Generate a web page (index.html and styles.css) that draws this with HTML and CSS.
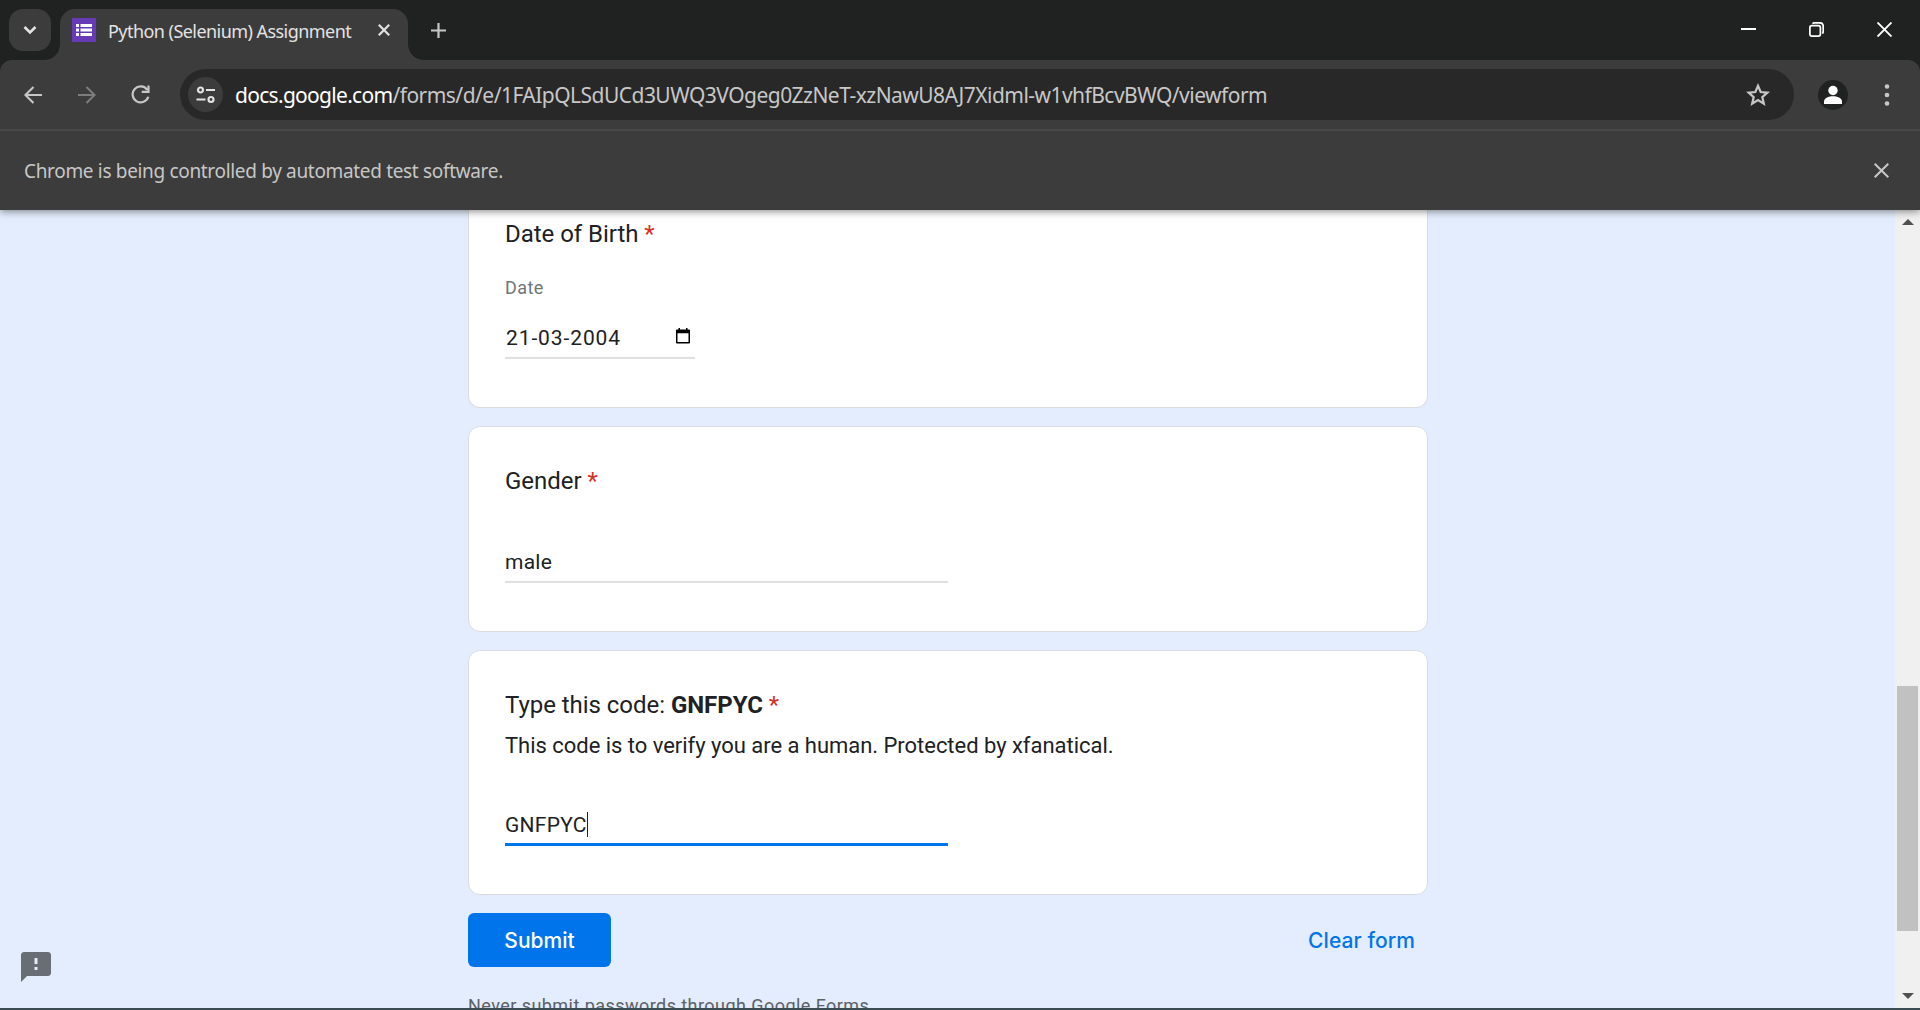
FILE: index.html
```html
<!DOCTYPE html>
<html lang="en">
<head>
<meta charset="utf-8">
<title>Python (Selenium) Assignment</title>
<link rel="stylesheet" href="styles.css">
</head>
<body>
<div class="browser">
  <header class="tabstrip">
    <button class="tab-search" aria-label="Search tabs"><svg width="14" height="10" viewBox="0 0 14 10"><path d="M1.5 2l5.500 5.500L12.500 2" fill="none" stroke="#e3e3e3" stroke-width="2.600"/></svg></button>
    <div class="tab">
      <svg class="favicon" width="24" height="24" viewBox="0 0 24 24"><rect width="24" height="24" rx="1" fill="#673ab7"/><path d="M4 6h3v3H4zM8.500 6H20v3H8.500zM4 10.500h3v3H4zM8.500 10.500H20v3H8.500zM4 15h3v3H4zM8.500 15H20v3H8.500z" fill="#fff"/></svg>
      <span class="tab-title">Python (Selenium) Assignment</span>
      <svg width="12" height="12" viewBox="0 0 12 12"><path d="M.8.800l10.400 10.400M11.200.800L.8 11.200" stroke="#e3e3e3" stroke-width="2.200"/></svg>
    </div>
    <svg class="new-tab" width="15" height="15" viewBox="0 0 15 15"><path d="M7.500 0v15M0 7.500h15" stroke="#c7c7c7" stroke-width="2.200"/></svg>
    <div class="window-controls">
      <svg width="15" height="15" viewBox="0 0 15 15"><path d="M0 7h15" stroke="#fff" stroke-width="2"/></svg>
      <svg width="15" height="15" viewBox="0 0 15 15"><rect x=".9" y="3.600" width="10.500" height="10.500" rx="2" fill="none" stroke="#fff" stroke-width="1.700"/><path d="M3.500 1.600Q4 .8 5.500.800H10.500Q14.200.800 14.200 4.500V9.500Q14.200 11 13.300 11.500" fill="none" stroke="#fff" stroke-width="1.700"/></svg>
      <svg width="15" height="15" viewBox="0 0 15 15"><path d="M.5.500l14 14M14.500.500l-14 14" stroke="#fff" stroke-width="1.900"/></svg>
    </div>
  </header>
  <nav class="toolbar">
    <div class="nav-icons">
      <svg width="18" height="18" viewBox="0 0 18 18"><path d="M18 9H1.500M9.500.900L1.400 9l8.100 8.100" fill="none" stroke="#c7c7c7" stroke-width="2.100"/></svg>
      <svg width="18" height="18" viewBox="0 0 18 18"><path d="M0 9h16.500M8.500.900L16.600 9l-8.100 8.100" fill="none" stroke="#7c7c7c" stroke-width="2.100"/></svg>
      <svg width="19" height="19" viewBox="0 0 19 19"><path d="M16.200 4.800A8 8 0 1 0 17.300 11.700M17.500.500v6.300h-6.800" fill="none" stroke="#c7c7c7" stroke-width="2.200"/></svg>
    </div>
    <div class="omnibox">
      <span class="site-info"><svg width="20" height="18" viewBox="0 0 20 18"><g fill="none" stroke="#e3e3e3" stroke-width="2.200"><circle cx="4.500" cy="4" r="2.500"/><path d="M10 4h9M.5 13.500h9"/><circle cx="15" cy="13.500" r="2.500"/></g></svg></span>
      <span class="url"><span class="host">docs.google.com</span>/forms/d/e/1FAIpQLSdUCd3UWQ3VOgeg0ZzNeT-xzNawU8AJ7Xidml-w1vhfBcvBWQ/viewform</span>
      <svg class="star" width="24" height="24" viewBox="0 0 24 24"><path d="M12 2.800l2.650 6.200 6.750.600-5.100 4.450 1.530 6.600L12 17.150l-5.830 3.500L7.700 14.050 2.600 9.600l6.750-.6z" fill="none" stroke="#c7c7c7" stroke-width="2.200"/></svg>
    </div>
    <svg class="profile" width="30" height="30" viewBox="0 0 30 30"><circle cx="15" cy="15" r="15" fill="#202221"/><circle cx="15" cy="10.500" r="4.700" fill="#fff"/><path d="M6 24v-2.500C6 18 11 16.200 15 16.200s9 1.800 9 5.300V24z" fill="#fff"/></svg>
    <svg class="menu" width="6" height="22" viewBox="0 0 6 22"><g fill="#c7c7c7"><circle cx="3" cy="2.500" r="2.300"/><circle cx="3" cy="11" r="2.300"/><circle cx="3" cy="19.500" r="2.300"/></g></svg>
  </nav>
  <div class="infobar">
    <span class="info-text">Chrome is being controlled by automated test software.</span>
    <svg width="15" height="15" viewBox="0 0 15 15"><path d="M.7.700l13.600 13.600M14.300.700L.7 14.300" stroke="#c7c7c7" stroke-width="2"/></svg>
  </div>
  <div class="viewport">
    <main class="page">
      <form class="form">
        <section class="card card-cut">
          <h2 class="question">Date of Birth <span class="required">*</span></h2>
          <div class="date-label">Date</div>
          <div class="field date-field"><span>21-03-2004</span><svg width="14" height="16" viewBox="0 0 14 16"><path d="M2.500 0h1.500v1.500h6V0h1.500v1.500H13q1 0 1 1V14.500q0 1-1 1H1q-1 0-1-1V2.500q0-1 1-1h1.500zM1.500 5.300V14h11V5.300z" fill="#000" fill-rule="evenodd"/></svg></div>
        </section>
        <section class="card">
          <h2 class="question">Gender <span class="required">*</span></h2>
          <div class="field text-field"><span>male</span></div>
        </section>
        <section class="card">
          <h2 class="question">Type this code: <b>GNFPYC</b> <span class="required">*</span></h2>
          <p class="description">This code is to verify you are a human. Protected by xfanatical.</p>
          <div class="field text-field focused"><span>GNFPYC</span><span class="caret"></span></div>
        </section>
        <div class="actions">
          <button type="button" class="submit">Submit</button>
          <span class="clear">Clear form</span>
        </div>
        <p class="notice">Never submit passwords through Google Forms.</p>
      </form>
      <svg class="feedback" width="30" height="30" viewBox="2 2 20 20"><path d="M20 2H4c-1.100 0-2 .9-2 2v18l4-4h14c1.100 0 2-.9 2-2V4c0-1.100-.9-2-2-2zm-7 12h-2v-2h2v2zm0-4h-2V6h2v4z" fill="#696d74"/></svg>
    </main>
    <aside class="scrollbar">
      <svg width="12" height="6" viewBox="0 0 12 6"><path d="M0 6l6-6 6 6z" fill="#505050"/></svg>
      <span class="thumb"></span>
      <svg width="12" height="6" viewBox="0 0 12 6"><path d="M0 0l6 6 6-6z" fill="#505050"/></svg>
    </aside>
  </div>
</div>
</body>
</html>
```
FILE: styles.css
```css
* { box-sizing: border-box; }
body { margin: 0; overflow: hidden; background: #3b4c52; }
h2, p { margin: 0; font-weight: 400; }
svg { display: block; flex: none; }
button { border: 0; padding: 0; }

.browser { display: flex; flex-direction: column; width: 1920px; height: 1008px; background: #202221; font-family: "Noto Sans", sans-serif; }

.tabstrip { display: flex; height: 60px; padding: 9px 15px 0 9px; }
.tab-search { display: grid; place-items: center; width: 42px; height: 42px; border-radius: 14px; background: #3c3c3c; }
.tab { position: relative; display: flex; align-items: center; width: 348px; height: 51px; margin-left: 9px; padding: 0 18px 9px 12px; border-radius: 15px 15px 0 0; background: #3c3c3c; }
.tab::before, .tab::after { content: ""; position: absolute; bottom: 0; width: 15px; height: 15px; }
.tab::before { left: -15px; background: radial-gradient(circle at 0 0, transparent 14.5px, #3c3c3c 15px); }
.tab::after { right: -15px; background: radial-gradient(circle at 100% 0, transparent 14.5px, #3c3c3c 15px); }
.tab-title { margin: 2px auto 0 12px; color: #e3e3e3; font-size: 18px; line-height: 24px; letter-spacing: -.55px; white-space: nowrap; }
.new-tab { margin: 14px 0 0 23px; }
.window-controls { display: flex; gap: 53px; margin: 13px 13px 0 auto; }

.toolbar { display: flex; align-items: center; height: 71px; padding: 0 30px 0 24px; border-bottom: 2px solid #474747; border-radius: 12px 12px 0 0; background: #3c3c3c; }
.nav-icons { display: flex; align-items: center; gap: 35.5px; width: 156px; }
.omnibox { display: flex; align-items: center; width: 1614px; height: 51px; padding: 0 24px 0 8px; border-radius: 26px; background: #282828; }
.site-info { display: grid; place-items: center; width: 35px; height: 35px; border-radius: 50%; background: #3c3c3c; }
.url { margin-left: 12px; color: #c7c7c7; font-size: 21px; line-height: 30px; letter-spacing: -.53px; white-space: nowrap; }
.host { color: #fff; letter-spacing: -.7px; }
.star { margin-left: auto; }
.profile { margin-left: 24px; }
.menu { margin-left: auto; }

.infobar { position: relative; z-index: 1; display: flex; align-items: center; justify-content: space-between; height: 79px; padding: 0 31px 0 24px; background: #3c3c3c; color: #c7c7c7; font-size: 19px; letter-spacing: -.33px; box-shadow: 0 1px 8px rgba(0, 0, 0, .5); clip-path: inset(0 0 -20px 0); }

.viewport { display: flex; height: 798px; }
.page { position: relative; flex: 1; overflow: hidden; background: #e3edfd; font-family: Roboto, sans-serif; }
.form { display: flex; flex-direction: column; width: 960px; margin-left: 468px; color: #202124; }
.card { margin-bottom: 18px; padding: 36px 36px 48px; border: 1px solid #dadce0; border-radius: 12px; background: #fff; }
.card-cut { padding-top: 6px; border-top: 0; border-radius: 0 0 12px 12px; }
.question { font-size: 24px; line-height: 36px; letter-spacing: -.04px; }
.required { color: #d93025; }
.date-label { margin: 24px 0 20px; color: #70757a; font-size: 18px; line-height: 24px; letter-spacing: .45px; }
.field { display: flex; height: 39px; border-bottom: 2px solid #dfdfdf; font-size: 21px; line-height: 36px; letter-spacing: .25px; }
.date-field { justify-content: space-between; width: 190px; padding: 0 5px 0 1px; letter-spacing: .9px; }
.date-field svg { margin-top: 8px; }
.text-field { width: 443px; margin-top: 45px; }
.description { margin-top: 5px; font-size: 22px; line-height: 36px; letter-spacing: -.03px; }
.focused { margin-top: 43px; border-bottom: 3px solid #0075eb; }
.caret { width: 1px; height: 25px; margin-top: 5px; background: #202124; }
.actions { display: flex; justify-content: space-between; align-items: center; height: 54px; padding-right: 13px; font-family: Inter, sans-serif; font-size: 21px; font-weight: 500; }
.submit { width: 143px; height: 54px; border-radius: 6px; background: #0075eb; color: #fff; font: inherit; }
.clear { color: #0075eb; letter-spacing: .1px; }
.notice { margin-top: 27px; color: #5c6168; font-size: 18px; line-height: 24px; letter-spacing: .45px; white-space: nowrap; }
.feedback { position: absolute; left: 21px; bottom: 26px; }

.scrollbar { display: flex; flex-direction: column; align-items: center; width: 25px; padding: 9px 0; background: #f0f0f0; }
.thumb { width: 21px; height: 245px; margin: 461px 0 auto; background: #c1c1c1; }
```
